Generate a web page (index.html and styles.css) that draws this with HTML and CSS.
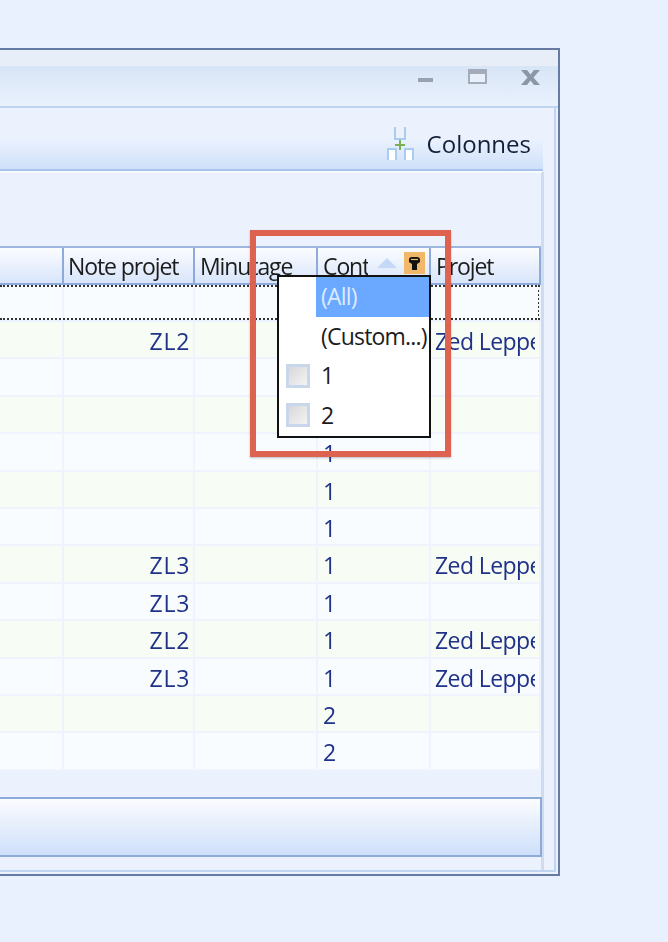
FILE: index.html
```html
<!DOCTYPE html>
<html lang="en">
<head>
  <meta charset="UTF-8">
  <meta name="viewport" content="width=device-width, initial-scale=1.0">
  <title>Colonnes</title>
  <link rel="stylesheet" href="styles.css">
</head>
<body>
  <div class="window">
    <div class="titlebar">
      <span class="win-min"></span>
      <span class="win-max"></span>
      <svg class="win-close" width="21" height="17" viewBox="0 0 21 17">
        <path d="M1 1h6l3.500 4.500L14 1h6l-6.500 7.500L20 16h-6l-3.500-4.500L7 16H1l6.500-7.500z" fill="#8c97a6"/>
      </svg>
    </div>
    <div class="body">
      <div class="toolbar">
        <svg class="col-icon" width="28" height="34" viewBox="0 0 28 34">
          <path d="M9 0v12h10V0" fill="none" stroke="#a9cdf0" stroke-width="2"/>
          <path d="M2 33V22h8v11M19 33V22h8v11" fill="#fff" stroke="#a9cdf0" stroke-width="2"/>
          <path d="M14 13v10M9 18h10" stroke="#7cae52" stroke-width="2" fill="none"/>
        </svg>
        <span class="toolbar-label">Colonnes</span>
      </div>
      <div class="content">
        <div class="grid">
          <div class="row header">
            <div class="cell"></div>
            <div class="cell">Note projet</div>
            <div class="cell">Minutage</div>
            <div class="cell cont-head">
              <span class="cont-text">Contrat</span>
              <span class="sort-arrow"></span>
              <span class="filter-btn">
                <svg width="13" height="15" viewBox="0 0 13 15"><path d="M1 4q0-3 3-3h5q3 0 3 3v2l-3 2v6H4V8L1 6z" fill="#111"/><path d="M3 3.500h7" stroke="#f0b868" stroke-width="1.200"/></svg>
              </span>
            </div>
            <div class="cell">Projet</div>
          </div>
          <div class="row filter-row">
            <div class="cell"></div><div class="cell"></div><div class="cell"></div><div class="cell"></div><div class="cell"></div>
          </div>
          <div class="row green"><div class="cell"></div><div class="cell right">ZL2</div><div class="cell"></div><div class="cell">1</div><div class="cell clip"><span>Zed Leppelin</span></div></div>
          <div class="row"><div class="cell"></div><div class="cell right"></div><div class="cell"></div><div class="cell">1</div><div class="cell"></div></div>
          <div class="row green"><div class="cell"></div><div class="cell right"></div><div class="cell"></div><div class="cell">1</div><div class="cell"></div></div>
          <div class="row"><div class="cell"></div><div class="cell right"></div><div class="cell"></div><div class="cell">1</div><div class="cell"></div></div>
          <div class="row green"><div class="cell"></div><div class="cell right"></div><div class="cell"></div><div class="cell">1</div><div class="cell"></div></div>
          <div class="row"><div class="cell"></div><div class="cell right"></div><div class="cell"></div><div class="cell">1</div><div class="cell"></div></div>
          <div class="row green"><div class="cell"></div><div class="cell right">ZL3</div><div class="cell"></div><div class="cell">1</div><div class="cell clip"><span>Zed Leppelin</span></div></div>
          <div class="row"><div class="cell"></div><div class="cell right">ZL3</div><div class="cell"></div><div class="cell">1</div><div class="cell"></div></div>
          <div class="row green"><div class="cell"></div><div class="cell right">ZL2</div><div class="cell"></div><div class="cell">1</div><div class="cell clip"><span>Zed Leppelin</span></div></div>
          <div class="row"><div class="cell"></div><div class="cell right">ZL3</div><div class="cell"></div><div class="cell">1</div><div class="cell clip"><span>Zed Leppelin</span></div></div>
          <div class="row green"><div class="cell"></div><div class="cell right"></div><div class="cell"></div><div class="cell">2</div><div class="cell"></div></div>
          <div class="row"><div class="cell"></div><div class="cell right"></div><div class="cell"></div><div class="cell">2</div><div class="cell"></div></div>
        </div>
        <div class="statusbar"></div>
      </div>
    </div>
  </div>

  <!-- dropdown and the red highlight sit over the grid -->
  <div class="dropdown">
    <div class="dd-item"><span class="dd-check"></span><span class="dd-label selected">(All)</span></div>
    <div class="dd-item"><span class="dd-check"></span><span class="dd-label">(Custom...)</span></div>
    <div class="dd-item"><span class="dd-check"><span class="checkbox"></span></span><span class="dd-label">1</span></div>
    <div class="dd-item"><span class="dd-check"><span class="checkbox"></span></span><span class="dd-label">2</span></div>
  </div>
  <div class="highlight"></div>
</body>
</html>
```

FILE: styles.css
```css
html, body {
  margin: 0;
  padding: 0;
}

body {
  width: 668px;
  height: 942px;
  overflow: hidden;
  position: relative;
  background-color: #eaf1fe;
  font-family: "Open Sans", sans-serif;
  font-size: 23px;
  letter-spacing: -0.6px;
}

.window {
  box-sizing: border-box;
  width: 560px;
  height: 828px;
  margin-top: 48px;
  border: 2px solid #667ba3;
  border-left: none;
  display: flex;
  flex-direction: column;
  background-color: #ebf2fe;
  filter: blur(0.4px);
}

/* title bar */
.titlebar {
  box-sizing: border-box;
  height: 58px;
  flex: none;
  display: flex;
  align-items: flex-start;
  border-bottom: 2px solid #bfd4f1;
  background: linear-gradient(#e8eef8 0, #e8eef8 16px, #d8e5f6 16px, #e9f1fd 100%);
}

.win-min {
  width: 15px;
  height: 4px;
  margin: 28px 0 0 418px;
  background-color: #98a2b0;
}

.win-max {
  box-sizing: border-box;
  width: 19px;
  height: 15px;
  margin: 19px 0 0 35px;
  border: 2px solid #a3adba;
  border-top-width: 5px;
  background-color: #e8f0fb;
}

.win-close {
  margin: 19px 0 0 33px;
}

/* main area */
.body {
  flex: 1;
  display: flex;
  flex-direction: column;
  border-right: 2px solid #bfd4f1;
  border-bottom: 2px solid #bfd4f1;
  margin-right: 2px;
  margin-bottom: 2px;
}

.toolbar {
  box-sizing: border-box;
  width: 543px;
  height: 63px;
  flex: none;
  display: flex;
  align-items: flex-start;
  justify-content: flex-end;
  padding: 19px 12px 0 0;
  border-bottom: 2px solid #a9c3ea;
  background: linear-gradient(#ebf2fe 0, #ebf2fe 50%, #cfe0fa 100%);
}

.col-icon {
  margin-right: 13px;
}

.toolbar-label {
  color: #141f38;
  font-size: 24px;
  letter-spacing: 0;
  line-height: 33px;
}

.content {
  box-sizing: border-box;
  width: 544px;
  flex: 1;
  padding-top: 73px;
  border-right: 3px solid #cfdcf0;
  border-top: 2px solid #f6f9ff;
}

/* grid */
.grid {
  height: 525px;
}

.row {
  display: grid;
  grid-template-columns: 64px 131px 123px 113px 110px;
  height: 37.400px;
  box-sizing: border-box;
  background-color: #f8fcff;
  border-bottom: 2px solid #eef3fd;
  color: #1f3288;
}

.row.green {
  background-color: #f7fcf5;
}

.cell {
  box-sizing: border-box;
  padding: 0 5px;
  line-height: 38px;
  white-space: nowrap;
  overflow: hidden;
  border-right: 2px solid #eef3fd;
}

.cell.right {
  text-align: right;
  padding-right: 3px;
  letter-spacing: 0.7px;
}

.clip {
  padding-left: 4px;
}

.clip span {
  display: block;
  width: 100px;
  overflow: hidden;
}

.row.header {
  height: 39px;
  color: #1c1c1c;
  letter-spacing: -1.1px;
  background: linear-gradient(#fbfcff, #d8e5fb);
  border-top: 2px solid #9db6e0;
  border-bottom: 2px solid #8eaadb;
}

.row.header .cell {
  border-right: 2px solid #8eaadb;
  overflow: visible;
  padding-left: 4px;
  line-height: 36px;
}

.row.header .cell:nth-child(3) {
  padding-left: 5px;
}

.row.header .cell:last-child {
  padding-left: 5px;
}

.row.filter-row {
  border: 2px dotted #333;
  border-left: none;
  width: 540px;
  height: 35px;
  margin-bottom: 2px;
}

.cont-head {
  position: relative;
}

.cont-text {
  display: inline-block;
  width: 45px;
  padding-left: 1px;
  overflow: hidden;
  vertical-align: top;
}

.sort-arrow {
  position: absolute;
  left: 59px;
  top: 10px;
  width: 0;
  height: 0;
  border-left: 10px solid transparent;
  border-right: 10px solid transparent;
  border-bottom: 10px solid #c5d8f5;
}

.filter-btn {
  position: absolute;
  left: 86px;
  top: 4px;
  width: 21px;
  height: 22px;
  display: flex;
  align-items: center;
  justify-content: center;
  background-color: #f0b868;
}

.statusbar {
  box-sizing: border-box;
  width: 542px;
  height: 60px;
  margin-top: 26px;
  border: 2px solid #8eaadb;
  border-left: none;
  background: linear-gradient(#fbfcff, #cfe0fb);
}

/* dropdown over the grid */
.dropdown {
  position: absolute;
  left: 277px;
  top: 275px;
  box-sizing: border-box;
  width: 154px;
  height: 163px;
  border: 2px solid #111;
  background-color: #fff;
  color: #1c1c1c;
  letter-spacing: -0.8px;
}

.dd-item {
  display: flex;
  height: 39.500px;
}

.dd-check {
  width: 37px;
  flex: none;
  display: flex;
  align-items: center;
  justify-content: center;
  box-sizing: border-box;
}

.dd-label {
  flex: 1;
  padding-left: 5px;
  line-height: 39px;
  white-space: nowrap;
}

.dd-label.selected {
  background-color: #6aa9ff;
  color: #dfeaff;
}

.checkbox {
  box-sizing: border-box;
  width: 24px;
  height: 24px;
  border: 3px solid #c9d7ec;
  background: linear-gradient(135deg, #d8d8da, #f4f4f5);
}

.highlight {
  position: absolute;
  left: 250px;
  top: 230px;
  box-sizing: border-box;
  width: 201px;
  height: 227px;
  border: 6px solid #dd6250;
  box-shadow: 0 1px 2px rgba(0, 0, 0, 0.25);
}
```
